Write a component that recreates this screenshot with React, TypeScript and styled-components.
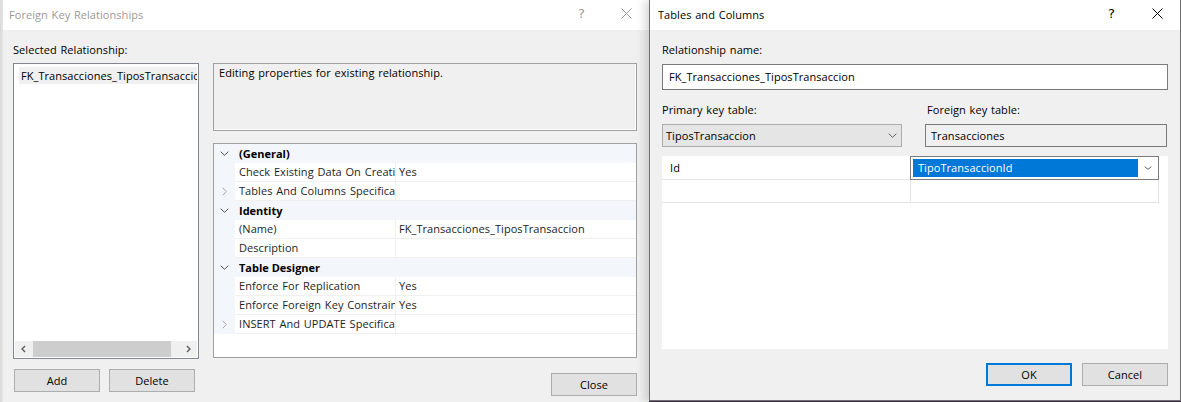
import React from "react";
import styled, { createGlobalStyle } from "styled-components";

const FONT = `"Open Sans", "Noto Sans", "Liberation Sans", sans-serif`;

const GlobalStyle = createGlobalStyle`
  html, body { margin: 0; padding: 0; }
  body {
    background: #f0f0f0;
    font-family: ${FONT};
    font-size: 11px;
    letter-spacing: 0.06px;
    word-spacing: 0.8px;
    color: #000;
    overflow: hidden;
  }
  *, *::before, *::after { box-sizing: border-box; }
`;

const Screen = styled.div`
  display: flex;
  width: 1181px;
  height: 402px;
  overflow: hidden;
  background: #f0f0f0;
`;

const DesktopEdge = styled.div`
  flex: 0 0 3px;
  background: linear-gradient(90deg, #d9d9d9, #e6e6e6);
`;

const LeftDialog = styled.section`
  flex: 0 0 646px;
  height: 402px;
  display: flex;
  flex-direction: column;
  background: #f0f0f0;
`;

const RightWrap = styled.div`
  flex: 0 0 532px;
  height: 402px;
  background: #3b2d4b;
  position: relative;
  z-index: 1;
  box-shadow: -4px 0 9px rgba(0, 0, 0, 0.16);
`;

const RightDialog = styled.section`
  height: 401px;
  display: flex;
  flex-direction: column;
  background: #f0f0f0;
  border: 1px solid #6f6f6f;
  border-top: none;
`;

const TitleBar = styled.header<{ $inactive?: boolean; $inset: number }>`
  flex: 0 0 30px;
  height: 30px;
  display: flex;
  align-items: center;
  background: #fff;
  padding-left: ${(p) => p.$inset}px;
  color: ${(p) => (p.$inactive ? "#9a9a9a" : "#000")};
`;

const TitleText = styled.span`
  flex: 1;
  line-height: 16px;
  margin-top: -1px;
  white-space: nowrap;
`;

const CaptionButton = styled.span<{ $w: number }>`
  flex: 0 0 ${(p) => p.$w}px;
  height: 30px;
  display: flex;
  align-items: center;
  justify-content: center;
  padding-bottom: 3px;
  font-size: 13px;
  font-family: "DejaVu Sans", ${FONT};
`;

const Glyph = styled.svg`
  display: block;
  flex: none;
`;

type Dir = "down" | "right" | "left";

const Chevron: React.FC<{ dir: Dir; w: number; h: number; color: string; stroke?: number }> = ({
  dir,
  w,
  h,
  color,
  stroke = 1,
}) => {
  const s = stroke / 2 + 0.2;
  let d = "";
  if (dir === "down") d = `M${s} ${s} L${w / 2} ${h - s} L${w - s} ${s}`;
  if (dir === "right") d = `M${s} ${s} L${w - s} ${h / 2} L${s} ${h - s}`;
  if (dir === "left") d = `M${w - s} ${s} L${s} ${h / 2} L${w - s} ${h - s}`;
  return (
    <Glyph width={w} height={h} viewBox={`0 0 ${w} ${h}`}>
      <path d={d} fill="none" stroke={color} strokeWidth={stroke} />
    </Glyph>
  );
};

const CloseX: React.FC<{ color: string }> = ({ color }) => (
  <Glyph width={11} height={11} viewBox="0 0 11 11">
    <path d="M0.5 0.5 L10.5 10.5 M10.5 0.5 L0.5 10.5" stroke={color} strokeWidth={1} fill="none" />
  </Glyph>
);

/* ---------- left dialog ---------- */

const LeftBody = styled.div`
  flex: 1;
  display: flex;
  flex-direction: column;
  padding: 12px 12px 0 10px;
`;

const FieldLabel = styled.div<{ $indent?: number }>`
  height: 16px;
  line-height: 16px;
  white-space: nowrap;
  padding-left: ${(p) => p.$indent ?? 0}px;
`;

const SplitRow = styled.div`
  display: grid;
  grid-template-columns: 186px 424px;
  column-gap: 14px;
  margin-top: 5px;
`;

const Column = styled.div`
  display: flex;
  flex-direction: column;
`;

const ListBox = styled.div`
  height: 296px;
  border: 1px solid #828790;
  background: #fff;
  display: flex;
  flex-direction: column;
  padding: 3px 1px 1px 1px;
`;

const ListItem = styled.div`
  margin-left: 4px;
  height: 17px;
  line-height: 17px;
  background: #f0f0f0;
  padding-left: 2px;
  white-space: nowrap;
  overflow: hidden;
`;

const Filler = styled.div`
  flex: 1;
`;

const HScroll = styled.div`
  height: 16px;
  display: flex;
  background: #f0f0f0;
`;

const ScrollArrow = styled.div`
  flex: 0 0 17px;
  display: flex;
  align-items: center;
  justify-content: center;
`;

const ScrollTrack = styled.div`
  flex: 1;
  display: flex;
  padding-left: 1px;
`;

const ScrollThumb = styled.div`
  width: 138px;
  background: #cdcdcd;
`;

const ButtonRow = styled.div<{ $align: "start" | "end"; $gap: number; $top: number }>`
  display: flex;
  justify-content: ${(p) => (p.$align === "end" ? "flex-end" : "flex-start")};
  gap: ${(p) => p.$gap}px;
  margin-top: ${(p) => p.$top}px;
  padding-left: ${(p) => (p.$align === "start" ? 1 : 0)}px;
`;

const PushButton = styled.button<{ $default?: boolean }>`
  width: 86px;
  height: 23px;
  padding: 0;
  background: #e1e1e1;
  border: ${(p) => (p.$default ? "2px solid #0078d7" : "1px solid #adadad")};
  font-family: ${FONT};
  font-size: 11px;
  letter-spacing: 0.06px;
  color: #000;
  line-height: 1;
`;

const DescBox = styled.div`
  height: 68px;
  border: 1px solid #a0a0a0;
  box-shadow: inset -1px -1px 0 #fff;
  padding: 1px 5px;
  line-height: 16px;
`;

const PropGrid = styled.div`
  margin-top: 12px;
  height: 215px;
  border: 1px solid #a0a0a0;
  background: #fff;
  display: flex;
  flex-direction: column;
`;

const CategoryRow = styled.div`
  display: grid;
  grid-template-columns: 21px 1fr;
  height: 19px;
  background: #f3f6fb;
  align-items: center;
`;

const MarginCell = styled.div`
  height: 100%;
  display: flex;
  align-items: center;
  justify-content: center;
  background: #f3f6fb;
`;

const CategoryLabel = styled.div`
  font-weight: bold;
  padding-left: 4px;
  line-height: 18px;
  letter-spacing: 0;
  word-spacing: 0;
`;

const PropRow = styled.div`
  display: grid;
  grid-template-columns: 21px 161px 1fr;
  height: 19px;
`;

const NameCell = styled.div`
  border-bottom: 1px solid #f0f0f0;
  border-right: 1px solid #f0f0f0;
  padding-left: 4px;
  line-height: 18px;
  white-space: nowrap;
  overflow: hidden;
  color: #1e1e1e;
`;

const ValueCell = styled.div`
  border-bottom: 1px solid #f0f0f0;
  padding-left: 3px;
  line-height: 18px;
  white-space: nowrap;
  overflow: hidden;
  color: #1e1e1e;
`;

/* ---------- right dialog ---------- */

const RightBody = styled.div`
  flex: 1;
  display: flex;
  flex-direction: column;
  padding: 12px 12px 0;
`;

const TextInput = styled.div`
  margin-top: 6px;
  height: 26px;
  border: 1px solid #7a7a7a;
  background: #fff;
  padding-left: 6px;
  line-height: 24px;
  white-space: nowrap;
`;

const TwoCols = styled.div`
  display: grid;
  grid-template-columns: 240px 242px;
  column-gap: 23px;
  margin-top: 12px;
  row-gap: 6px;
`;

const ComboBox = styled.div`
  height: 23px;
  border: 1px solid #adadad;
  background: #e5e5e5;
  display: flex;
  align-items: center;
  padding-left: 3px;
`;

const ComboText = styled.span`
  flex: 1;
  line-height: 21px;
  white-space: nowrap;
`;

const DropSlot = styled.span<{ $w: number }>`
  flex: 0 0 ${(p) => p.$w}px;
  display: flex;
  align-items: center;
  justify-content: center;
`;

const ReadOnlyBox = styled.div`
  height: 23px;
  border: 1px solid #7a7a7a;
  background: #f0f0f0;
  padding-left: 5px;
  line-height: 21px;
`;

const MappingGrid = styled.div`
  margin-top: 9px;
  height: 193px;
  background: #fff;
  display: flex;
  flex-direction: column;
`;

const MapRow = styled.div<{ $first?: boolean }>`
  display: grid;
  width: 497px;
  grid-template-columns: ${(p) => (p.$first ? "248px 249px" : "249px 248px")};
  height: ${(p) => (p.$first ? 24 : 23)}px;
`;

const MapCell = styled.div<{ $sep?: boolean }>`
  border-bottom: 1px solid #e3e3e3;
  border-right: ${(p) => (p.$sep ? "1px solid #e3e3e3" : "none")};
  padding-left: 8px;
  display: flex;
  align-items: center;
`;

const CellEditor = styled.div`
  border: 1px solid #7a7a7a;
  background: #fff;
  display: flex;
  padding: 2px 1px 2px 2px;
`;

const Highlight = styled.div`
  flex: 1;
  background: #0078d7;
  color: #fff;
  padding-left: 5px;
  line-height: 18px;
  white-space: nowrap;
`;

type Prop = { name: string; value: string; expandable?: boolean };
type Section = { title: string; rows: Prop[] };

const sections: Section[] = [
  {
    title: "(General)",
    rows: [
      { name: "Check Existing Data On Creation Or Re-Enabling", value: "Yes" },
      { name: "Tables And Columns Specification", value: "", expandable: true },
    ],
  },
  {
    title: "Identity",
    rows: [
      { name: "(Name)", value: "FK_Transacciones_TiposTransaccion" },
      { name: "Description", value: "" },
    ],
  },
  {
    title: "Table Designer",
    rows: [
      { name: "Enforce For Replication", value: "Yes" },
      { name: "Enforce Foreign Key Constraint", value: "Yes" },
      { name: "INSERT And UPDATE Specification", value: "", expandable: true },
    ],
  },
];

export default function App() {
  return (
    <>
      <GlobalStyle />
      <Screen>
        <DesktopEdge />
        <LeftDialog>
          <TitleBar $inactive $inset={6}>
            <TitleText>Foreign Key Relationships</TitleText>
            <CaptionButton $w={45}>?</CaptionButton>
            <CaptionButton $w={45}>
              <CloseX color="#9a9a9a" />
            </CaptionButton>
          </TitleBar>
          <LeftBody>
            <FieldLabel>Selected Relationship:</FieldLabel>
            <SplitRow>
              <Column>
                <ListBox>
                  <ListItem>FK_Transacciones_TiposTransaccion</ListItem>
                  <Filler />
                  <HScroll>
                    <ScrollArrow>
                      <Chevron dir="left" w={5} h={8} color="#606060" stroke={1.5} />
                    </ScrollArrow>
                    <ScrollTrack>
                      <ScrollThumb />
                    </ScrollTrack>
                    <ScrollArrow>
                      <Chevron dir="right" w={5} h={8} color="#606060" stroke={1.5} />
                    </ScrollArrow>
                  </HScroll>
                </ListBox>
                <ButtonRow $align="start" $gap={9} $top={10}>
                  <PushButton>Add</PushButton>
                  <PushButton>Delete</PushButton>
                </ButtonRow>
              </Column>
              <Column>
                <DescBox>Editing properties for existing relationship.</DescBox>
                <PropGrid>
                  {sections.map((sec) => (
                    <React.Fragment key={sec.title}>
                      <CategoryRow>
                        <MarginCell>
                          <Chevron dir="down" w={9} h={5} color="#505050" />
                        </MarginCell>
                        <CategoryLabel>{sec.title}</CategoryLabel>
                      </CategoryRow>
                      {sec.rows.map((r) => (
                        <PropRow key={r.name}>
                          <MarginCell>
                            {r.expandable && <Chevron dir="right" w={5} h={9} color="#a8a8a8" />}
                          </MarginCell>
                          <NameCell>{r.name}</NameCell>
                          <ValueCell>{r.value}</ValueCell>
                        </PropRow>
                      ))}
                    </React.Fragment>
                  ))}
                </PropGrid>
                <ButtonRow $align="end" $gap={0} $top={15}>
                  <PushButton>Close</PushButton>
                </ButtonRow>
              </Column>
            </SplitRow>
          </LeftBody>
        </LeftDialog>

        <RightWrap>
          <RightDialog>
            <TitleBar $inset={8}>
              <TitleText>Tables and Columns</TitleText>
              <CaptionButton $w={45}>?</CaptionButton>
              <CaptionButton $w={46}>
                <CloseX color="#000" />
              </CaptionButton>
            </TitleBar>
            <RightBody>
              <FieldLabel>Relationship name:</FieldLabel>
              <TextInput>FK_Transacciones_TiposTransaccion</TextInput>
              <TwoCols>
                <FieldLabel>Primary key table:</FieldLabel>
                <FieldLabel $indent={2}>Foreign key table:</FieldLabel>
                <ComboBox>
                  <ComboText>TiposTransaccion</ComboText>
                  <DropSlot $w={18}>
                    <Chevron dir="down" w={9} h={5} color="#606060" />
                  </DropSlot>
                </ComboBox>
                <ReadOnlyBox>Transacciones</ReadOnlyBox>
              </TwoCols>
              <MappingGrid>
                <MapRow $first>
                  <MapCell>Id</MapCell>
                  <CellEditor>
                    <Highlight>TipoTransaccionId</Highlight>
                    <DropSlot $w={19}>
                      <Chevron dir="down" w={8} h={4} color="#606060" />
                    </DropSlot>
                  </CellEditor>
                </MapRow>
                <MapRow>
                  <MapCell $sep />
                  <MapCell $sep />
                </MapRow>
              </MappingGrid>
              <ButtonRow $align="end" $gap={10} $top={14}>
                <PushButton $default>OK</PushButton>
                <PushButton>Cancel</PushButton>
              </ButtonRow>
            </RightBody>
          </RightDialog>
        </RightWrap>
      </Screen>
    </>
  );
}
